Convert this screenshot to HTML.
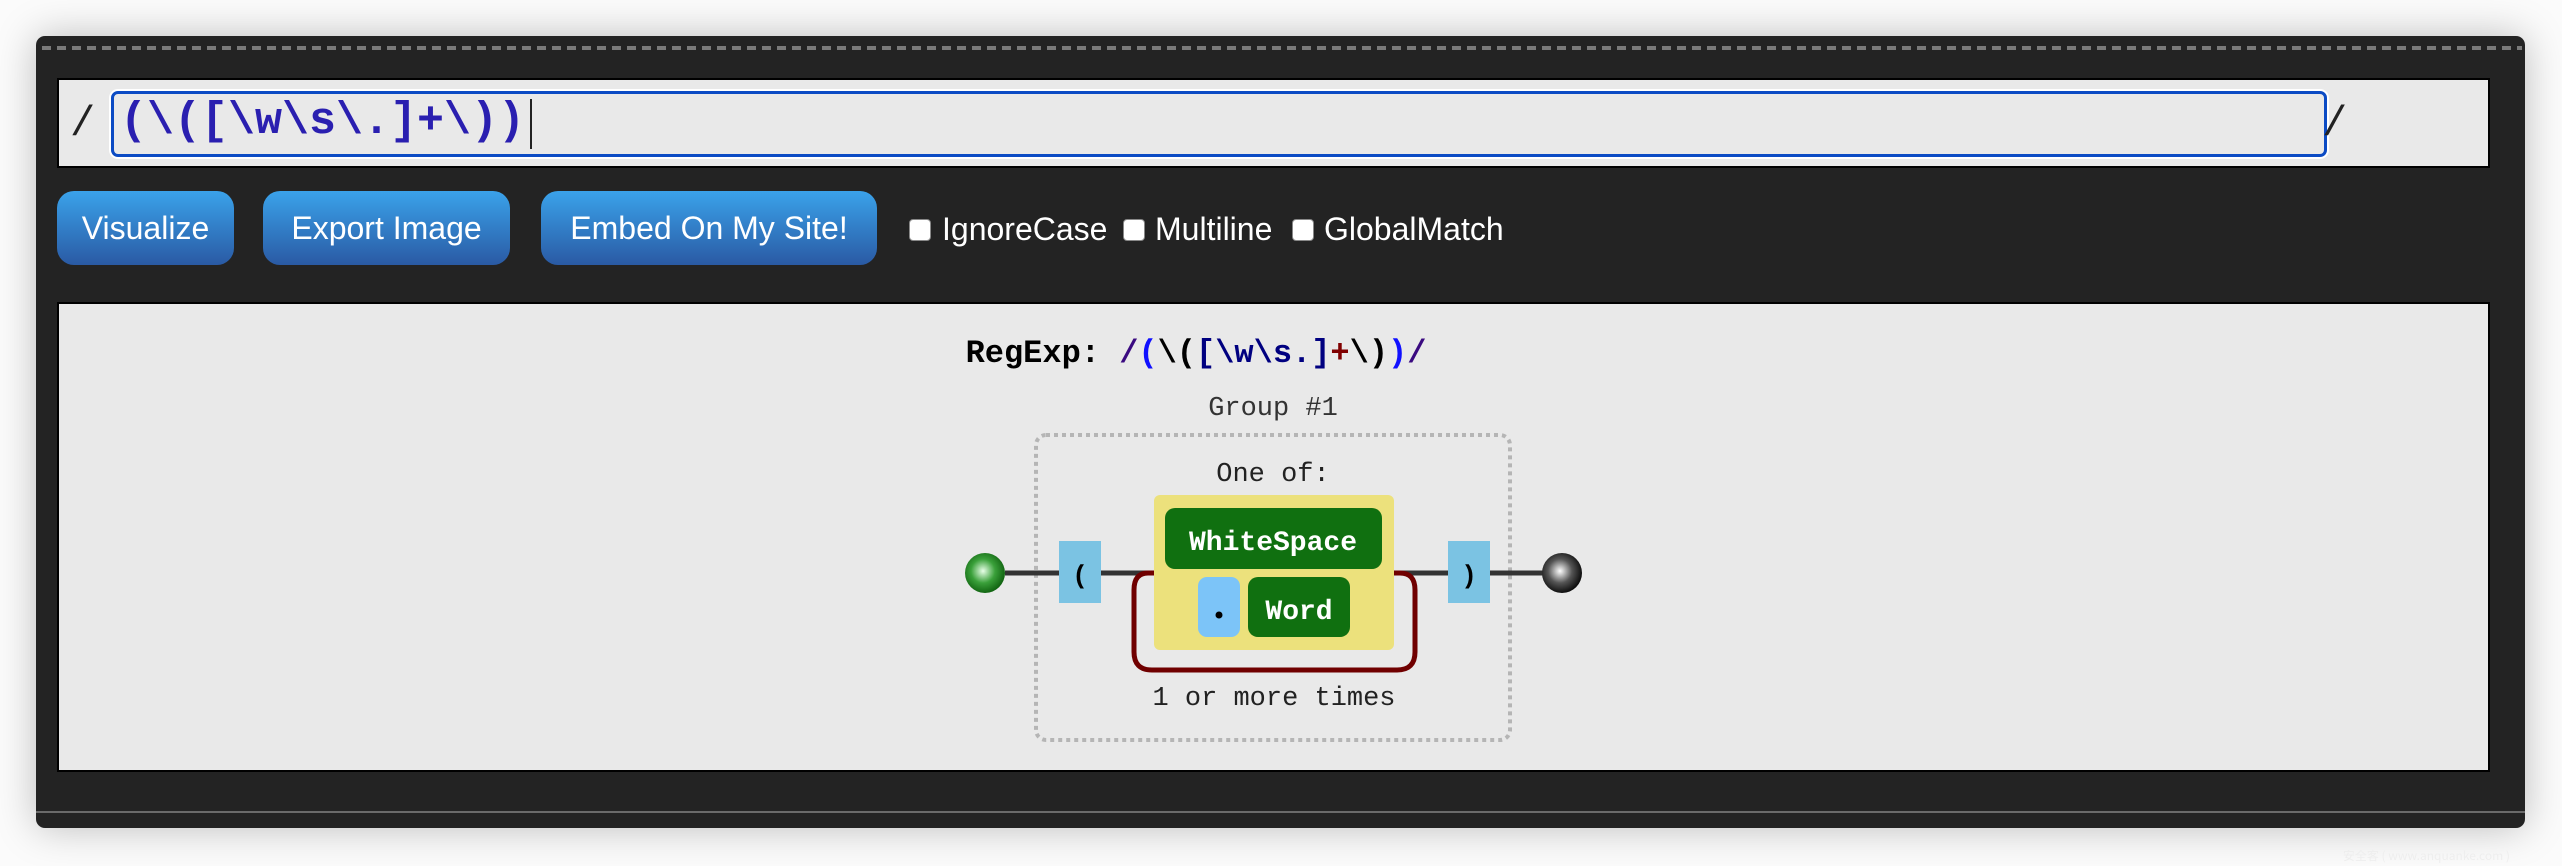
<!DOCTYPE html>
<html><head><meta charset="utf-8"><style>
*{margin:0;padding:0;box-sizing:border-box}
body{width:2562px;height:866px;background:#fbfbfb;position:relative;overflow:hidden;font-family:"Liberation Sans",sans-serif}
.win{position:absolute;left:36px;top:36px;width:2489px;height:792px;background:#232323;border-radius:9px;box-shadow:0 0 40px rgba(0,0,0,.25)}
.panel{position:absolute;background:#e9e9e9;border:2px solid #000}
.inp{position:absolute;left:111px;top:91px;width:2216px;height:66px;border:3px solid #0c4bc4;border-radius:7px;background:#e9e9e9;box-shadow:0 0 0 2px #fff}
.mono{font-family:"Liberation Mono",monospace}
.btn{position:absolute;top:191px;height:74px;border-radius:17px;background:linear-gradient(#3aa2ea,#2a5aa4);color:#fff;font-size:32px;display:flex;align-items:center;justify-content:center}
.cb{position:absolute;top:219px;width:22px;height:22px;background:#fff;border-radius:4px;border:1px solid #888}
.lbl{position:absolute;top:211px;color:#fff;font-size:32px}
</style></head><body>
<div class="win"></div>
<svg style="position:absolute;left:0;top:0" width="2562" height="60"><line x1="42" y1="48" x2="2522" y2="48" stroke="#7a7a7a" stroke-width="4" stroke-dasharray="9 6"/></svg>
<div class="panel" style="left:57px;top:78px;width:2433px;height:90px"></div>
<div class="mono" style="position:absolute;left:70px;top:100px;font-size:42px;color:#222">/</div>
<div class="inp"></div>
<div class="mono" style="position:absolute;left:120px;top:96px;font-size:45px;font-weight:bold;color:#2a1fb0">(\([\w\s\.]+\))</div>
<div style="position:absolute;left:530px;top:99px;width:2px;height:50px;background:#222"></div>
<div class="mono" style="position:absolute;left:2322px;top:100px;font-size:42px;color:#222">/</div>
<div class="btn" style="left:57px;width:177px">Visualize</div>
<div class="btn" style="left:263px;width:247px">Export Image</div>
<div class="btn" style="left:541px;width:336px">Embed On My Site!</div>
<div class="cb" style="left:909px"></div><div class="lbl" style="left:942px">IgnoreCase</div>
<div class="cb" style="left:1123px"></div><div class="lbl" style="left:1155px">Multiline</div>
<div class="cb" style="left:1292px"></div><div class="lbl" style="left:1324px">GlobalMatch</div>
<div class="panel" style="left:57px;top:302px;width:2433px;height:470px"></div>
<div style="position:absolute;left:36px;top:811px;width:2489px;height:2px;background:#6a6a6a"></div>
<svg style="position:absolute;left:0;top:0" width="2562" height="866">
<defs>
<radialGradient id="g1" cx=".45" cy=".45" r=".6"><stop offset="0" stop-color="#e8ffe8"/><stop offset=".5" stop-color="#3aa03a"/><stop offset="1" stop-color="#0a5a0a"/></radialGradient>
<radialGradient id="g2" cx=".45" cy=".45" r=".6"><stop offset="0" stop-color="#fff"/><stop offset=".5" stop-color="#555"/><stop offset="1" stop-color="#000"/></radialGradient>
</defs>
<text x="1196" y="362" text-anchor="middle" font-family="Liberation Mono,monospace" font-weight="bold" font-size="32"><tspan fill="#000">RegExp: </tspan><tspan fill="#3a0a80">/</tspan><tspan fill="#1010ff">(</tspan><tspan fill="#000">\(</tspan><tspan fill="#000080">[\w\s.]</tspan><tspan fill="#800000">+</tspan><tspan fill="#000">\)</tspan><tspan fill="#1010ff">)</tspan><tspan fill="#3a0a80">/</tspan></text>
<text x="1273" y="415" text-anchor="middle" font-family="Liberation Mono,monospace" font-size="27" fill="#333">Group #1</text>
<rect x="1036" y="435" width="474" height="305" rx="10" fill="none" stroke="#b5b5b5" stroke-width="4" stroke-dasharray="4 4"/>
<text x="1273" y="481" text-anchor="middle" font-family="Liberation Mono,monospace" font-size="27" fill="#222">One of:</text>
<path d="M1005 573H1059M1101 573H1154M1394 573H1448M1490 573H1545" stroke="#333" stroke-width="5"/>
<path d="M1154 573H1148Q1134 573 1134 590V652Q1134 670 1152 670H1397Q1415 670 1415 652V590Q1415 573 1400 573H1394" fill="none" stroke="#700000" stroke-width="5"/>
<rect x="1154" y="495" width="240" height="155" rx="6" fill="#ece17c"/>
<rect x="1165" y="508" width="217" height="61" rx="10" fill="#107010"/>
<text x="1273" y="550" text-anchor="middle" font-family="Liberation Mono,monospace" font-weight="bold" font-size="28" fill="#fff">WhiteSpace</text>
<rect x="1198" y="577" width="42" height="60" rx="9" fill="#7cc4f8"/>
<circle cx="1219" cy="615" r="3.5" fill="#000"/>
<rect x="1248" y="577" width="102" height="60" rx="10" fill="#107010"/>
<text x="1299" y="619" text-anchor="middle" font-family="Liberation Mono,monospace" font-weight="bold" font-size="28" fill="#fff">Word</text>
<text x="1274" y="705" text-anchor="middle" font-family="Liberation Mono,monospace" font-size="27" fill="#222">1 or more times</text>
<rect x="1059" y="541" width="42" height="62" fill="#7bc3e3"/>
<text x="1080" y="583" text-anchor="middle" font-family="Liberation Mono,monospace" font-weight="bold" font-size="26">(</text>
<rect x="1448" y="541" width="42" height="62" fill="#7bc3e3"/>
<text x="1469" y="583" text-anchor="middle" font-family="Liberation Mono,monospace" font-weight="bold" font-size="26">)</text>
<ellipse cx="985" cy="573" rx="20" ry="20" fill="url(#g1)"/>
<ellipse cx="1562" cy="573" rx="20" ry="20" fill="url(#g2)"/>
<text x="2510" y="860" text-anchor="end" font-family="Noto Sans CJK SC,sans-serif" font-size="12" fill="#eee">安全客 ( www.anquanke.com )</text>
</svg>
</body></html>
